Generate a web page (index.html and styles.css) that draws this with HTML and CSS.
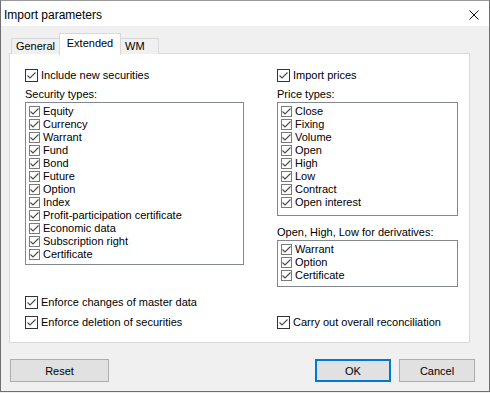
FILE: index.html
```html
<!DOCTYPE html>
<html lang="en">

<head>
    <meta charset="UTF-8">
    <title>Import parameters</title>
    <link rel="stylesheet" href="styles.css">
</head>

<body>

    <svg width="0" height="0" class="defs">
        <symbol id="tick" viewBox="0 0 13 13">
            <polyline points="2.5,6.5 5,9 10.5,3.5" fill="none" stroke="#4a4a4a" stroke-width="1.1"/>
        </symbol>
    </svg>

    <div class="window">
        <div class="titlebar">
            <span class="title">Import parameters</span>
            <svg class="close" width="10" height="10" viewBox="0 0 10 10">
                <path d="M0.5 0.5 L9.5 9.5 M9.5 0.5 L0.5 9.5" stroke="#111" stroke-width="1"/>
            </svg>
        </div>

        <div class="tabs">
            <div class="tab general">General</div>
            <div class="tab active">Extended</div>
            <div class="tab wm">WM</div>
        </div>

        <div class="panel">
            <div class="columns">
                <div class="col left">
                    <label class="check"><span class="box"><svg><use href="#tick"/></svg></span>Include new securities</label>
                    <div class="caption">Security types:</div>
                    <div class="list securities">
                        <div class="item"><span class="mini"><svg><use href="#tick"/></svg></span>Equity</div>
                        <div class="item"><span class="mini"><svg><use href="#tick"/></svg></span>Currency</div>
                        <div class="item"><span class="mini"><svg><use href="#tick"/></svg></span>Warrant</div>
                        <div class="item"><span class="mini"><svg><use href="#tick"/></svg></span>Fund</div>
                        <div class="item"><span class="mini"><svg><use href="#tick"/></svg></span>Bond</div>
                        <div class="item"><span class="mini"><svg><use href="#tick"/></svg></span>Future</div>
                        <div class="item"><span class="mini"><svg><use href="#tick"/></svg></span>Option</div>
                        <div class="item"><span class="mini"><svg><use href="#tick"/></svg></span>Index</div>
                        <div class="item"><span class="mini"><svg><use href="#tick"/></svg></span>Profit-participation certificate</div>
                        <div class="item"><span class="mini"><svg><use href="#tick"/></svg></span>Economic data</div>
                        <div class="item"><span class="mini"><svg><use href="#tick"/></svg></span>Subscription right</div>
                        <div class="item"><span class="mini"><svg><use href="#tick"/></svg></span>Certificate</div>
                    </div>
                    <label class="check enforce"><span class="box"><svg><use href="#tick"/></svg></span>Enforce changes of master data</label>
                </div>

                <div class="col right">
                    <label class="check"><span class="box"><svg><use href="#tick"/></svg></span>Import prices</label>
                    <div class="caption">Price types:</div>
                    <div class="list prices">
                        <div class="item"><span class="mini"><svg><use href="#tick"/></svg></span>Close</div>
                        <div class="item"><span class="mini"><svg><use href="#tick"/></svg></span>Fixing</div>
                        <div class="item"><span class="mini"><svg><use href="#tick"/></svg></span>Volume</div>
                        <div class="item"><span class="mini"><svg><use href="#tick"/></svg></span>Open</div>
                        <div class="item"><span class="mini"><svg><use href="#tick"/></svg></span>High</div>
                        <div class="item"><span class="mini"><svg><use href="#tick"/></svg></span>Low</div>
                        <div class="item"><span class="mini"><svg><use href="#tick"/></svg></span>Contract</div>
                        <div class="item"><span class="mini"><svg><use href="#tick"/></svg></span>Open interest</div>
                    </div>
                    <div class="caption deriv">Open, High, Low for derivatives:</div>
                    <div class="list derivatives">
                        <div class="item"><span class="mini"><svg><use href="#tick"/></svg></span>Warrant</div>
                        <div class="item"><span class="mini"><svg><use href="#tick"/></svg></span>Option</div>
                        <div class="item"><span class="mini"><svg><use href="#tick"/></svg></span>Certificate</div>
                    </div>
                </div>
            </div>

            <div class="columns last">
                <div class="col left">
                    <label class="check"><span class="box"><svg><use href="#tick"/></svg></span>Enforce deletion of securities</label>
                </div>
                <div class="col right">
                    <label class="check"><span class="box"><svg><use href="#tick"/></svg></span>Carry out overall reconciliation</label>
                </div>
            </div>
        </div>

        <div class="footer">
            <button class="reset">Reset</button>
            <div class="actions">
                <button class="ok">OK</button>
                <button class="cancel">Cancel</button>
            </div>
        </div>
    </div>

</body>

</html>
```

FILE: styles.css
```css
body {
    margin: 0;
    padding: 0;
    background-color: #f0f0f0;
    font-family: "Liberation Sans", Arial, sans-serif;
    font-size: 11px;
    color: #000000;
}

.defs {
    position: absolute;
}

.window {
    width: 490px;
    height: 392px;
    box-sizing: border-box;
    border: 1px solid #6f6f6f;
    border-top-color: #9a9a9a;
    background-color: #f0f0f0;
    display: flex;
    flex-direction: column;
}

.titlebar {
    height: 25px;
    background-color: #ffffff;
    display: flex;
    align-items: center;
    justify-content: space-between;
    padding-left: 3px;
    padding-right: 10px;
}

.title {
    font-size: 12px;
    margin-top: 2px;
}

.close {
    margin-top: 3px;
}

.tabs {
    display: flex;
    align-items: flex-end;
    height: 20px;
    margin-top: 8px;
    padding-left: 10px;
    position: relative;
    z-index: 1;
    margin-bottom: -1px;
}

.tab {
    box-sizing: border-box;
    height: 16px;
    line-height: 15px;
    text-align: center;
    border: 1px solid #d9d9d9;
    border-bottom: none;
    background-color: #f0f0f0;
}

.tab.general {
    width: 48px;
    border-right: none;
}

.tab.active {
    width: 62px;
    height: 22px;
    line-height: 19px;
    background-color: #ffffff;
    margin-bottom: -1px;
}

.tab.wm {
    width: 38px;
    border-left: none;
    text-align: left;
    padding-left: 4px;
}

.panel {
    margin-left: 8px;
    width: 461px;
    height: 290px;
    box-sizing: border-box;
    border: 1px solid #d9d9d9;
    background-color: #ffffff;
    padding-top: 15px;
}

.columns {
    display: flex;
}

.col.left {
    margin-left: 15px;
    width: 219px;
}

.col.right {
    margin-left: 33px;
    width: 181px;
}

.check {
    display: flex;
    align-items: center;
    height: 13px;
    line-height: 13px;
    white-space: nowrap;
}

.box {
    width: 13px;
    height: 13px;
    box-sizing: border-box;
    border: 1px solid #333333;
    margin-right: 3px;
    flex-shrink: 0;
    position: relative;
}

.box svg {
    position: absolute;
    left: -1px;
    top: -1px;
    width: 13px;
    height: 13px;
}

.caption {
    height: 13px;
    line-height: 13px;
    margin-top: 6px;
    margin-bottom: 1px;
}

.caption.deriv {
    margin-top: 10px;
    margin-bottom: 1px;
}

.list {
    box-sizing: border-box;
    border: 1px solid #828790;
    padding-top: 2px;
    padding-left: 3px;
}

.list.securities {
    height: 163px;
}

.list.prices {
    height: 114px;
}

.list.derivatives {
    height: 47px;
}

.item {
    display: flex;
    align-items: center;
    height: 13px;
    line-height: 13px;
    white-space: nowrap;
}

.mini {
    width: 11px;
    height: 11px;
    box-sizing: border-box;
    border: 1px solid #7a7a7a;
    margin-right: 3px;
    flex-shrink: 0;
    position: relative;
}

.mini svg {
    position: absolute;
    left: -2px;
    top: -2px;
    width: 13px;
    height: 13px;
}

.check.enforce {
    margin-top: 31px;
}

.columns.last {
    margin-top: 7px;
}

.footer {
    display: flex;
    justify-content: space-between;
    margin-top: 16px;
    padding-left: 9px;
    padding-right: 14px;
}

.actions {
    display: flex;
    gap: 8px;
}

button {
    font-family: "Liberation Sans", Arial, sans-serif;
    font-size: 11px;
    color: #000000;
    height: 23px;
    box-sizing: border-box;
    background-color: #e1e1e1;
    border: 1px solid #adadad;
    padding: 0;
}

button.reset {
    width: 99px;
}

button.ok,
button.cancel {
    width: 76px;
}

button.ok {
    border: 2px solid #0078d7;
}
```
